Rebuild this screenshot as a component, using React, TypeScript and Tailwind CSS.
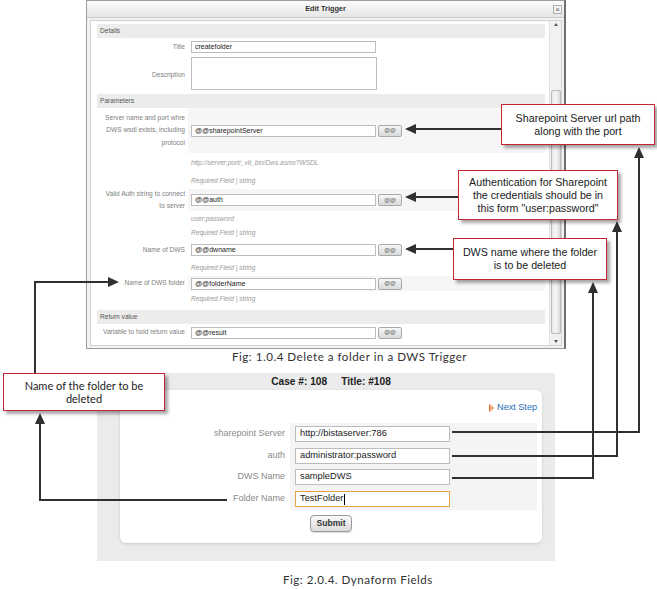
import React from 'react';

// Small field box that looks like a text input
const Field: React.FC<{ value: string; className?: string }> = ({ value, className = '' }) => (
  <div
    className={`h-[12px] w-[185px] border border-[#bdbdbd] bg-white px-[3px] text-[7px] leading-[10px] text-[#222] ${className}`}
  >
    {value}
  </div>
);

const AtButton = () => (
  <div className="ml-[2px] flex h-[12px] w-[24px] items-center justify-center rounded-[2px] border border-[#a9a9a9] bg-gradient-to-b from-[#f7f7f7] to-[#d9d9d9] text-[6px] font-bold text-[#666]">
    @@
  </div>
);

const Band: React.FC<{ title: string; className?: string }> = ({ title, className = '' }) => (
  <div className={`flex h-[14px] items-center bg-[#ececec] pl-[3px] text-[6.6px] text-[#555] ${className}`}>
    {title}
  </div>
);

const ParamRow: React.FC<{ label: React.ReactNode; value: string; height: string; shaded?: boolean }> = ({
  label,
  value,
  height,
  shaded = true,
}) => (
  <div className={`flex ${height}`}>
    <div className="flex w-[91px] items-center justify-end pr-[3px] text-right text-[6.6px] leading-[12.5px] text-[#808080]">
      {label}
    </div>
    <div className={`flex flex-1 items-center pl-[3px] ${shaded ? 'bg-[#f6f6f6]' : ''}`}>
      <Field value={value} />
      <AtButton />
    </div>
  </div>
);

const Hint: React.FC<{ text: string; height: string }> = ({ text, height }) => (
  <div className={`flex items-center pl-[94px] text-[6.6px] italic text-[#9a9a9a] ${height}`}>{text}</div>
);

const EditTrigger = () => (
  <div className="ml-[86px] flex h-[349px] w-[480px] flex-col border border-r-2 border-[#9c9c9c] border-r-[#6e6e6e] bg-[#f2f2f2]">
    {/* Title bar */}
    <div className="relative flex h-[17px] items-center justify-center border-b border-[#c9c9c9] bg-gradient-to-b from-[#fbfbfb] to-[#e6e6e6]">
      <span className="text-[7.3px] font-bold text-[#333]">Edit Trigger</span>
      <div className="absolute right-[2px] top-[4px] flex h-[9px] w-[9px] items-center justify-center border border-[#b0b0b0] bg-[#f4f4f4] text-[8px] leading-none text-[#555]">
        ×
      </div>
    </div>

    {/* Body */}
    <div className="flex flex-1 pl-[3px] pr-[2px] pt-[2px] pb-[2px]">
      <div className="flex flex-1 border border-[#d2d2d2] bg-white">
        <div className="flex-1 pl-[6px] pr-[4px] pt-[3px]">
          <Band title="Details" />
          <div className="flex h-[18px]">
            <div className="flex w-[91px] items-center justify-end pr-[3px] text-[6.6px] text-[#808080]">Title</div>
            <div className="flex items-center pl-[3px]">
              <Field value="createfolder" />
            </div>
          </div>
          <div className="flex h-[38px]">
            <div className="flex w-[91px] items-center justify-end pr-[3px] text-[6.6px] text-[#808080]">Description</div>
            <div className="pl-[3px] pt-[1px]">
              <div className="h-[33px] w-[186px] border border-[#bdbdbd] bg-white" />
            </div>
          </div>
          <Band title="Parameters" />
          <ParamRow
            height="h-[45px]"
            value="@@sharepointServer"
            label={
              <span>
                Server name and port whre
                <br />
                DWS wsdl exists, including
                <br />
                protocol
              </span>
            }
          />
          <Hint height="h-[20px]" text="http://server:port/_vti_bin/Dws.asmx?WSDL" />
          <Hint height="h-[16px]" text="Required Field | string" />
          <ParamRow
            height="h-[22px]"
            value="@@auth"
            label={
              <span>
                Valid Auth string to connect
                <br />
                to server
              </span>
            }
          />
          <Hint height="h-[15px]" text="user:password" />
          <Hint height="h-[14px]" text="Required Field | string" />
          <ParamRow height="h-[20px]" value="@@dwname" label="Name of DWS" shaded={false} />
          <Hint height="h-[16px]" text="Required Field | string" />
          <ParamRow height="h-[15px]" value="@@folderName" label="Name of DWS folder" />
          <Hint height="h-[16px]" text="Required Field | string" />
          <Band title="Return value" className="mt-[3px]" />
          <ParamRow height="h-[17px]" value="@@result" label="Variable to hold return value" shaded={false} />
        </div>
        {/* Scrollbar */}
        <div className="flex w-[12px] flex-col items-center border-l border-[#e2e2e2] bg-[#f1f1f1] py-[2px]">
          <div className="h-0 w-0 border-x-[2.5px] border-b-[3px] border-x-transparent border-b-[#555]" />
          <div className="mt-[64px] h-[244px] w-[10px] rounded-[2px] border border-[#bcbcbc] bg-gradient-to-r from-[#e8e8e8] via-[#f6f6f6] to-[#dadada]" />
          <div className="mt-auto h-0 w-0 border-x-[2.5px] border-t-[3px] border-x-transparent border-t-[#555]" />
        </div>
      </div>
    </div>
  </div>
);

const formRows = [
  { label: 'sharepoint Server', value: 'http://bistaserver:786', h: 'h-[22px]' },
  { label: 'auth', value: 'administrator:password', h: 'h-[21px]' },
  { label: 'DWS Name', value: 'sampleDWS', h: 'h-[22px]' },
  { label: 'Folder Name', value: 'TestFolder', h: 'h-[22px]', focused: true },
];

const Dynaform = () => (
  <div className="ml-[97px] h-[188px] w-[458px] bg-[#ebebeb]">
    <div className="ml-[23px] flex h-[17px] w-[422px] items-center justify-center gap-[14px] text-[10.2px] font-bold text-[#222]">
      <span>Case #: 108</span>
      <span>Title: #108</span>
    </div>
    <div className="ml-[23px] h-[153px] w-[422px] rounded-[6px] bg-white shadow-[0_1px_3px_rgba(0,0,0,0.15)]">
      <div className="box-content flex h-[18px] items-center justify-end gap-[3px] pr-[5px] pt-[9px]">
        <svg width="5" height="8" viewBox="0 0 5 8">
          <path d="M0 0 L5 4 L0 8 Z" fill="#e8702a" />
          <path d="M1 2 L3 4 L1 6" stroke="#fff" strokeWidth="0.8" fill="none" />
        </svg>
        <span className="text-[9.1px] text-[#1f6db3]">Next Step</span>
      </div>
      <div className="mt-[6px] flex">
        <div className="w-[170px]">
          {formRows.map((r) => (
            <div key={r.label} className={`flex items-center justify-end pr-[5px] text-[9px] text-[#8a8a8a] ${r.h}`}>
              {r.label}
            </div>
          ))}
        </div>
        <div className="w-[247px] bg-[#f4f4f4] pl-[5px]">
          {formRows.map((r) => (
            <div key={r.label} className={`flex items-center ${r.h}`}>
              <div
                className={`flex h-[16px] w-[155px] items-center border bg-white px-[4px] text-[9.3px] text-[#222] ${
                  r.focused ? 'border-[#e6a245]' : 'border-[#bcbcbc]'
                }`}
              >
                {r.value}
                {r.focused && <span className="ml-[1px] h-[11px] w-px bg-black" />}
              </div>
            </div>
          ))}
        </div>
      </div>
      <div className="mt-[5px] flex justify-center">
        <div className="flex h-[17px] w-[42px] items-center justify-center rounded-[4px] border border-[#9a9a9a] bg-gradient-to-b from-[#fafafa] to-[#dcdcdc] text-[8.6px] font-bold text-[#333] shadow-[0_1px_1px_rgba(0,0,0,0.15)]">
          Submit
        </div>
      </div>
    </div>
  </div>
);

const Callout: React.FC<{ className: string; children: React.ReactNode }> = ({ className, children }) => (
  <div
    className={`absolute flex items-center justify-center border-[1.5px] border-[#c3262e] bg-white text-center text-[#222] shadow-[3px_3px_3px_rgba(0,0,0,0.35)] ${className}`}
  >
    {children}
  </div>
);

const Arrows = () => (
  <svg className="pointer-events-none absolute left-0 top-0" width="657" height="589" viewBox="0 0 657 589">
    <g stroke="#303030" strokeWidth="2" fill="none">
      <path d="M501 129 H414" />
      <path d="M458 197 H414" />
      <path d="M453 249 H414" />
      <path d="M35 373 V282 H110" />
      <path d="M227 500 H40 V422" />
      <path d="M452 432 H639 V155" />
      <path d="M452 456 H617 V229" />
      <path d="M452 478 H593 V290" />
    </g>
    <g fill="#303030">
      <polygon points="405,129 416,124 416,134" />
      <polygon points="405,197 416,192 416,202" />
      <polygon points="405,249 416,244 416,254" />
      <polygon points="119,282 108,277 108,287" />
      <polygon points="40,413 35,424 45,424" />
      <polygon points="639,147 634,158 644,158" />
      <polygon points="617,221 612,232 622,232" />
      <polygon points="593,282 588,293 598,293" />
    </g>
  </svg>
);

export default function App() {
  return (
    <div className="relative h-[589px] w-[657px] overflow-hidden bg-white font-['Liberation_Sans',Arial,sans-serif]">
      <div className="flex flex-col">
        <EditTrigger />
        <p className="ml-[232px] h-[16px] font-['Lato',sans-serif] text-[11.6px] leading-[16px] tracking-[0.5px] text-[#333]">
          Fig: 1.0.4 Delete a folder in a DWS Trigger
        </p>
        <div className="h-[8px]" />
        <Dynaform />
        <p className="ml-[283px] mt-[11px] h-[16px] font-['Lato',sans-serif] text-[11.6px] leading-[16px] tracking-[0.5px] text-[#333]">
          Fig: 2.0.4. Dynaform Fields
        </p>
      </div>

      <Arrows />

      <Callout className="left-[501px] top-[104px] h-[41px] w-[154px] text-[10.7px] leading-[13px]">
        Sharepoint Server url path
        <br />
        along with the port
      </Callout>
      <Callout className="left-[458px] top-[170px] h-[50px] w-[160px] text-[10.7px] leading-[13px]">
        Authentication for Sharepoint
        <br />
        the credentials should be in
        <br />
        this form "user:password"
      </Callout>
      <Callout className="left-[453px] top-[238px] h-[42px] w-[154px] text-[10.7px] leading-[13px]">
        DWS name where the folder
        <br />
        is to be deleted
      </Callout>
      <Callout className="left-[3px] top-[373px] h-[38px] w-[162px] font-['Lato',sans-serif] text-[11px] leading-[13px]">
        Name of the folder to be
        <br />
        deleted
      </Callout>
    </div>
  );
}
